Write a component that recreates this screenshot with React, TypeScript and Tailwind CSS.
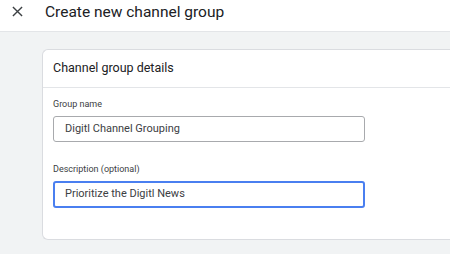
import React from "react";

function CloseIcon() {
  return (
    <svg width="11" height="11" viewBox="0 0 12 12" className="text-[#3c4043]">
      <path d="M1 1L11 11M11 1L1 11" stroke="currentColor" strokeWidth="1.5" />
    </svg>
  );
}

function Field({ label, value, focused }: { label: string; value: string; focused?: boolean }) {
  return (
    <div className="flex flex-col">
      <label className="text-[9px] leading-[12px] text-[#3c4043]">{label}</label>
      <div
        className={
          focused
            ? "mt-[6px] h-[27px] w-[312px] rounded-[3px] border-2 border-[#4a7ff0] pl-[10px] flex items-center"
            : "mt-[6px] h-[26px] w-[312px] rounded-[3px] border border-[#a8aaad] pl-[11px] flex items-center"
        }
      >
        <span className="text-[11px] text-[#3c4043]">{value}</span>
      </div>
    </div>
  );
}

export default function App() {
  return (
    <div className="w-[450px] h-[254px] overflow-hidden bg-[#f1f3f4] font-['Roboto',sans-serif]">
      <div className="h-[32px] bg-white border-b border-[#e3e5e8] flex items-start">
        <div className="w-[45px] flex justify-center pt-[6px] pl-[1px] pr-[11px]">
          <CloseIcon />
        </div>
        <h1 className="text-[15.5px] leading-[20px] pt-[2px] text-[#202124]">Create new channel group</h1>
      </div>
      <div className="pt-[17px] pl-[42px]">
        <div className="w-[420px] h-[191px] bg-white rounded-l-[6px] border border-r-0 border-[#dadce0]">
          <div className="h-[38px] flex items-center pl-[10px] border-b border-[#e3e5e8]">
            <span className="text-[12.5px] text-[#202124]">Channel group details</span>
          </div>
          <div className="pl-[10px] pt-[10px] flex flex-col gap-[21px]">
            <Field label="Group name" value="Digitl Channel Grouping" />
            <Field label="Description (optional)" value="Prioritize the Digitl News" focused />
          </div>
        </div>
      </div>
    </div>
  );
}
